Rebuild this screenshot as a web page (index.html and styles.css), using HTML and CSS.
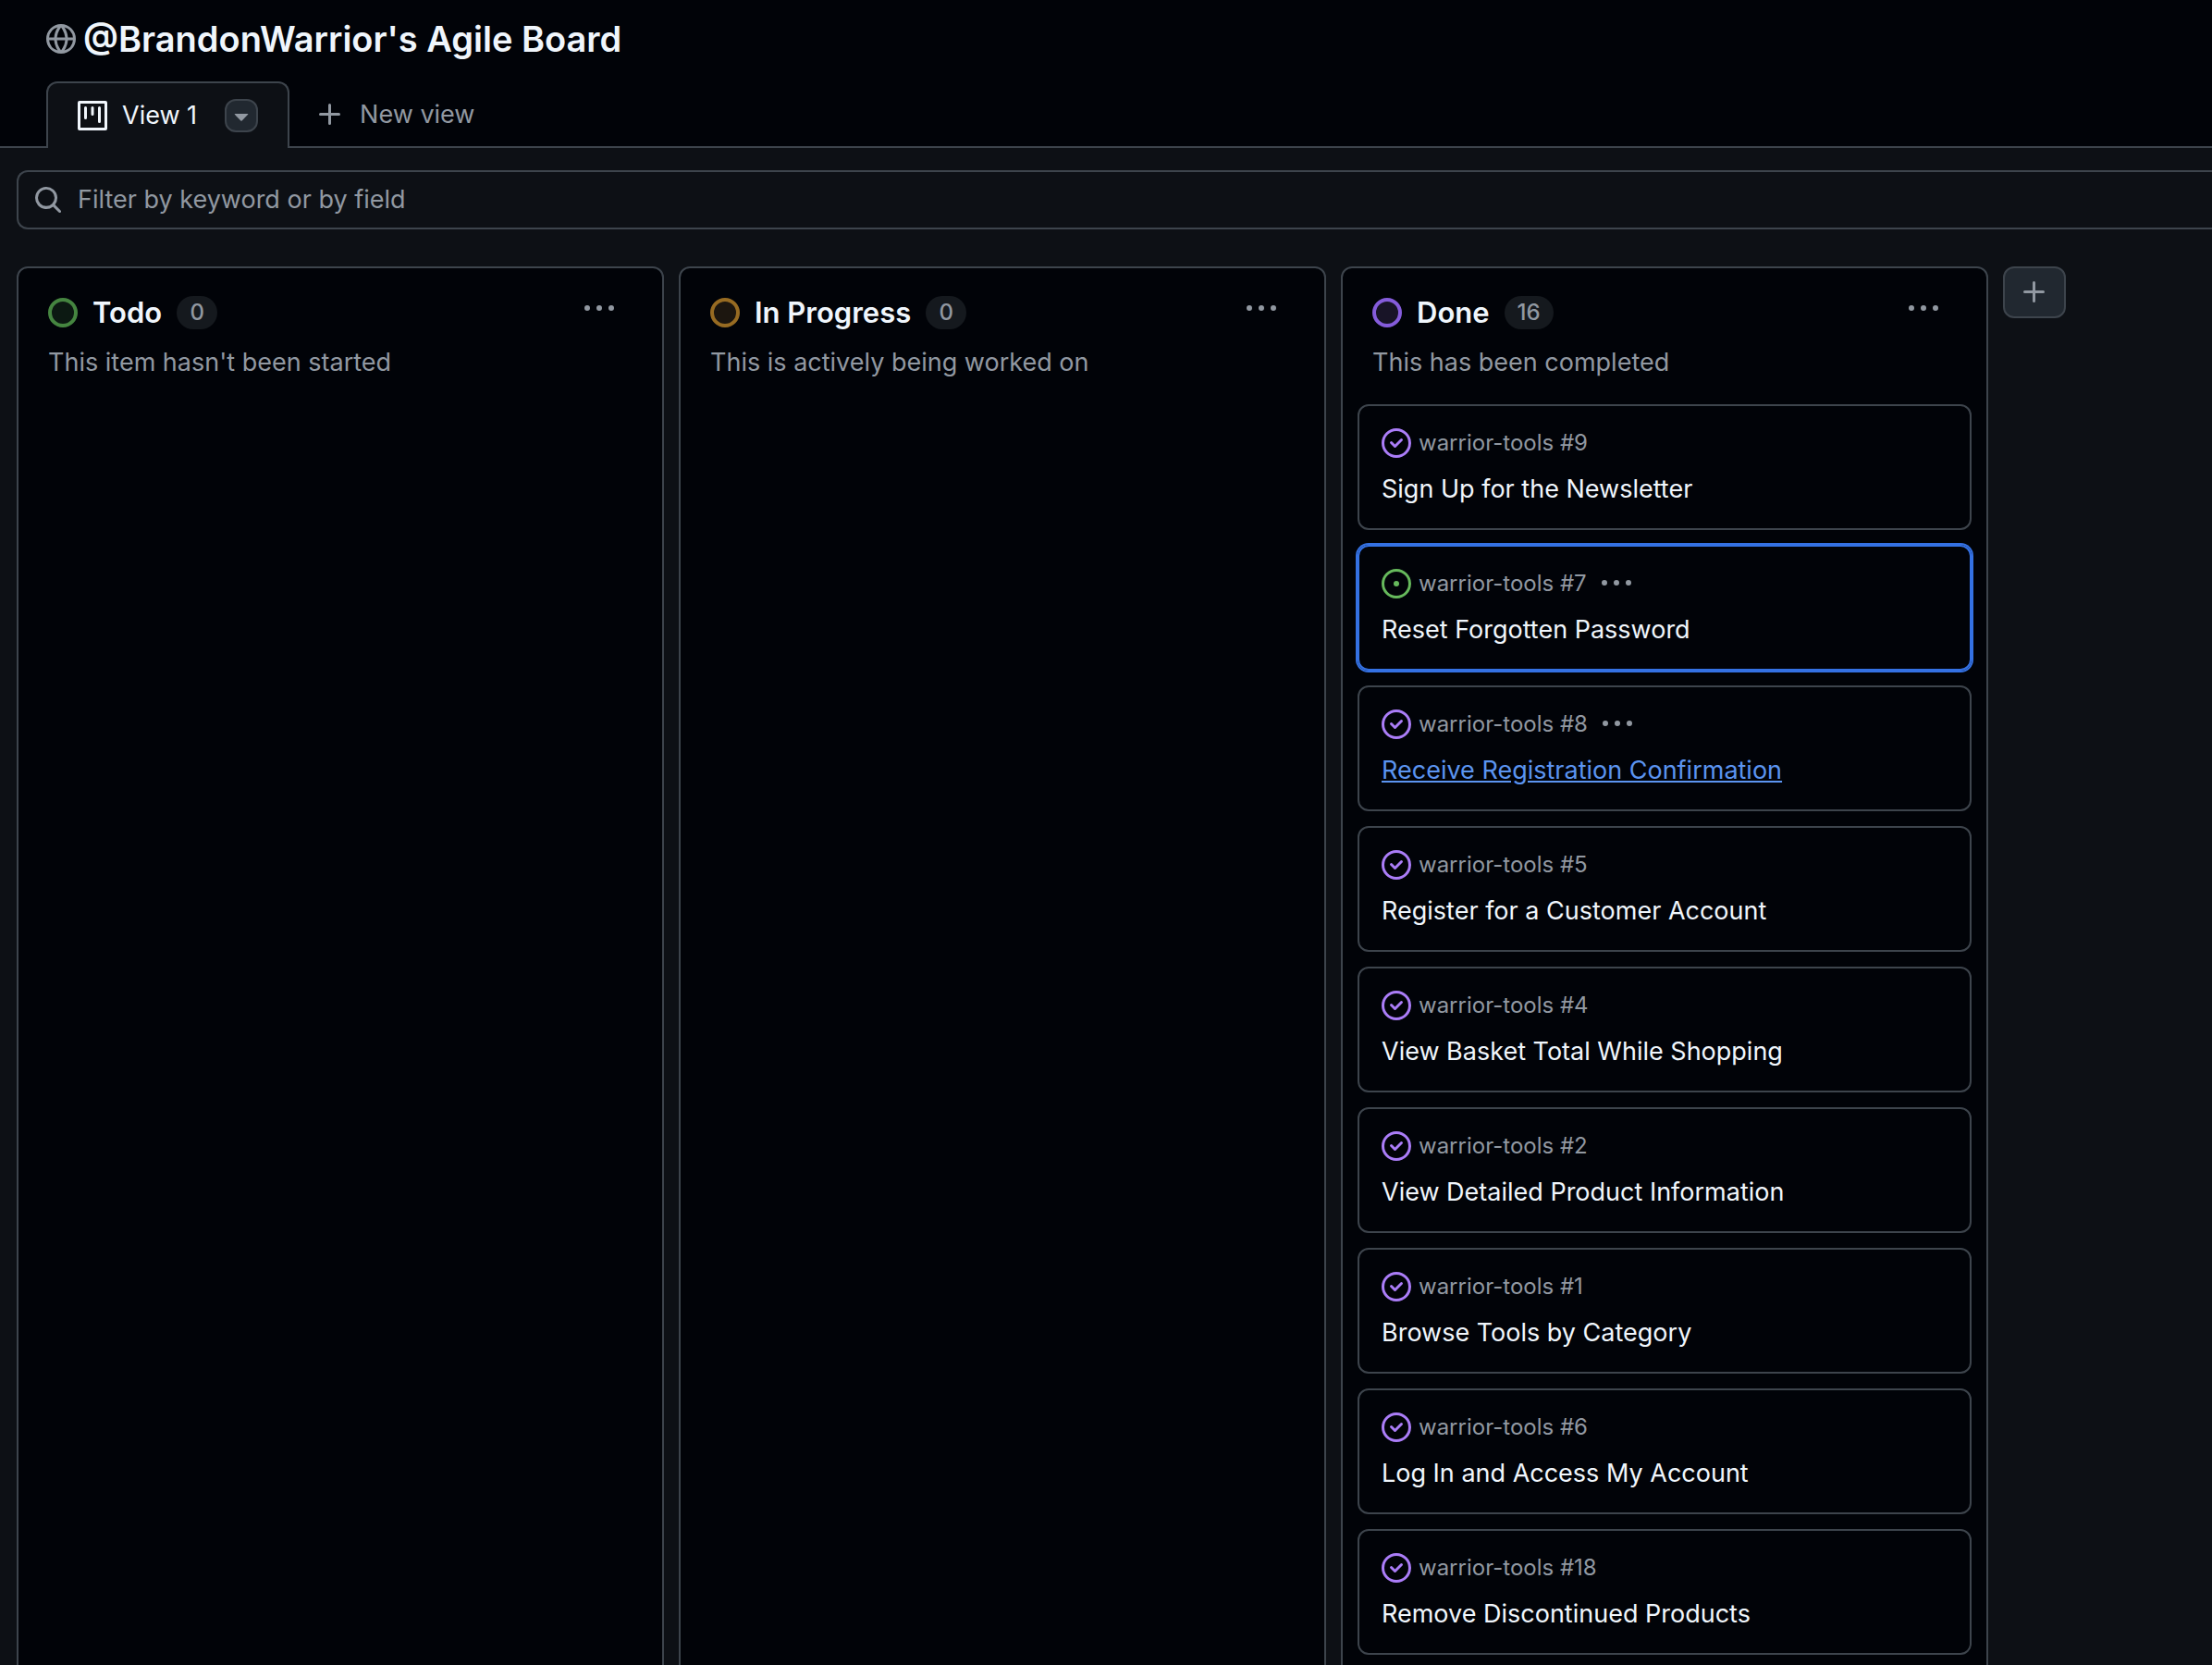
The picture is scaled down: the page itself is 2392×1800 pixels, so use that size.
FILE: index.html
```html
<!DOCTYPE html>
<html lang="en">
<head>
<meta charset="utf-8">
<meta name="viewport" content="width=device-width, initial-scale=1">
<title>@BrandonWarrior's Agile Board</title>
<link rel="stylesheet" href="styles.css">
</head>
<body>
<svg class="sprite" aria-hidden="true">
  <symbol id="closed" viewBox="0 0 16 16"><path d="M11.28 6.78a.75.75 0 0 0-1.06-1.06L7.25 8.69 5.78 7.22a.75.75 0 0 0-1.06 1.06l2 2a.75.75 0 0 0 1.06 0l3.5-3.5Z"/><path d="M16 8A8 8 0 1 1 0 8a8 8 0 0 1 16 0Zm-1.5 0a6.5 6.5 0 1 0-13 0 6.5 6.5 0 0 0 13 0Z"/></symbol>
  <symbol id="open" viewBox="0 0 16 16"><path d="M8 9.5a1.5 1.5 0 1 0 0-3 1.5 1.5 0 0 0 0 3Z"/><path d="M8 0a8 8 0 1 1 0 16A8 8 0 0 1 8 0ZM1.5 8a6.5 6.5 0 1 0 13 0 6.5 6.5 0 0 0-13 0Z"/></symbol>
  <symbol id="kebab" viewBox="0 0 16 16"><path d="M8 9a1.5 1.5 0 1 0 0-3 1.5 1.5 0 0 0 0 3ZM1.5 9a1.5 1.5 0 1 0 0-3 1.5 1.5 0 0 0 0 3Zm13 0a1.5 1.5 0 1 0 0-3 1.5 1.5 0 0 0 0 3Z"/></symbol>
  <symbol id="plus" viewBox="0 0 16 16"><path d="M7.75 2a.75.75 0 0 1 .75.75V7h4.25a.75.75 0 0 1 0 1.5H8.5v4.25a.75.75 0 0 1-1.5 0V8.5H2.75a.75.75 0 0 1 0-1.5H7V2.75A.75.75 0 0 1 7.75 2Z"/></symbol>
  <symbol id="globe" viewBox="0 0 16 16"><path d="M8 0a8 8 0 1 1 0 16A8 8 0 0 1 8 0ZM5.78 8.75a9.64 9.64 0 0 0 1.363 4.177c.255.426.542.832.857 1.215.245-.296.551-.705.857-1.215A9.64 9.64 0 0 0 10.22 8.75Zm4.44-1.5a9.64 9.64 0 0 0-1.363-4.177c-.307-.51-.612-.919-.857-1.215a9.927 9.927 0 0 0-.857 1.215A9.64 9.64 0 0 0 5.78 7.25Zm-5.944 1.5H1.543a6.507 6.507 0 0 0 4.666 5.5c-.123-.181-.24-.365-.352-.552-.715-1.192-1.437-2.874-1.581-4.948Zm-2.733-1.5h2.733c.144-2.074.866-3.756 1.58-4.948.12-.197.237-.381.353-.552a6.507 6.507 0 0 0-4.666 5.5Zm10.181 1.5c-.144 2.074-.866 3.756-1.58 4.948-.12.197-.237.381-.353.552a6.507 6.507 0 0 0 4.666-5.5Zm2.733-1.5a6.507 6.507 0 0 0-4.666-5.5c.123.181.24.365.353.552.714 1.192 1.436 2.874 1.58 4.948Z"/></symbol>
  <symbol id="board" viewBox="0 0 16 16"><path d="M1 0h14a1 1 0 0 1 1 1v14a1 1 0 0 1-1 1H1a1 1 0 0 1-1-1V1a1 1 0 0 1 1-1Zm.5 1.5v13h13v-13Z"/><path d="M4.25 3a.75.75 0 0 1 .75.75v5.5a.75.75 0 0 1-1.5 0v-5.5A.75.75 0 0 1 4.25 3ZM8 3a.75.75 0 0 1 .75.75v3.5a.75.75 0 0 1-1.5 0v-3.5A.75.75 0 0 1 8 3Zm3.75 0a.75.75 0 0 1 .75.75v7.5a.75.75 0 0 1-1.5 0v-7.5a.75.75 0 0 1 .75-.75Z"/></symbol>
  <symbol id="caret" viewBox="0 0 16 16"><path d="m4.427 7.427 3.396 3.396a.25.25 0 0 0 .354 0l3.396-3.396A.25.25 0 0 0 11.396 7H4.604a.25.25 0 0 0-.177.427Z"/></symbol>
  <symbol id="search" viewBox="0 0 16 16"><path d="M10.68 11.74a6 6 0 0 1-7.922-8.982 6 6 0 0 1 8.982 7.922l3.04 3.04a.749.749 0 0 1-.326 1.275.749.749 0 0 1-.734-.215ZM11.5 7a4.499 4.499 0 1 0-8.997 0A4.499 4.499 0 0 0 11.5 7Z"/></symbol>
</svg>

<header class="header">
  <div class="heading">
    <svg class="icon muted"><use href="#globe"/></svg>
    <h1 class="heading-text">@BrandonWarrior's Agile Board</h1>
  </div>
  <nav class="tabs" aria-label="Views">
    <div class="tab">
      <svg class="icon"><use href="#board"/></svg>
      <a class="tab-link" href="#view-1">View 1</a>
      <button class="tab-menu" type="button" aria-label="View options"><svg class="icon"><use href="#caret"/></svg></button>
    </div>
    <button class="new-view" type="button"><svg class="icon"><use href="#plus"/></svg>New view</button>
  </nav>
</header>

<main class="main" id="view-1">
  <div class="filter">
    <label class="filter-label" for="filter" aria-label="Filter"><svg class="icon muted"><use href="#search"/></svg></label>
    <input class="filter-input" id="filter" type="text" placeholder="Filter by keyword or by field">
  </div>

  <div class="columns">
    <section class="column">
      <div class="column-head">
        <span class="dot dot-green"></span>
        <h2 class="column-title">Todo</h2>
        <span class="count">0</span>
        <button class="menu column-menu" type="button" aria-label="Todo actions"><svg class="icon"><use href="#kebab"/></svg></button>
      </div>
      <p class="column-note">This item hasn't been started</p>
    </section>

    <section class="column">
      <div class="column-head">
        <span class="dot dot-orange"></span>
        <h2 class="column-title">In Progress</h2>
        <span class="count">0</span>
        <button class="menu column-menu" type="button" aria-label="In Progress actions"><svg class="icon"><use href="#kebab"/></svg></button>
      </div>
      <p class="column-note">This is actively being worked on</p>
    </section>

    <section class="column">
      <div class="column-head">
        <span class="dot dot-purple"></span>
        <h2 class="column-title">Done</h2>
        <span class="count">16</span>
        <button class="menu column-menu" type="button" aria-label="Done actions"><svg class="icon"><use href="#kebab"/></svg></button>
      </div>
      <p class="column-note">This has been completed</p>
      <div class="cards">
        <article class="card">
          <div class="card-meta"><svg class="icon closed"><use href="#closed"/></svg>warrior-tools #9</div>
          <a class="card-title" href="#9">Sign Up for the Newsletter</a>
        </article>
        <article class="card card-selected">
          <div class="card-meta"><svg class="icon open"><use href="#open"/></svg>warrior-tools #7<button class="menu card-menu" type="button" aria-label="Item actions"><svg class="icon"><use href="#kebab"/></svg></button></div>
          <a class="card-title" href="#7">Reset Forgotten Password</a>
        </article>
        <article class="card">
          <div class="card-meta"><svg class="icon closed"><use href="#closed"/></svg>warrior-tools #8<button class="menu card-menu" type="button" aria-label="Item actions"><svg class="icon"><use href="#kebab"/></svg></button></div>
          <a class="card-title card-title-active" href="#8">Receive Registration Confirmation</a>
        </article>
        <article class="card">
          <div class="card-meta"><svg class="icon closed"><use href="#closed"/></svg>warrior-tools #5</div>
          <a class="card-title" href="#5">Register for a Customer Account</a>
        </article>
        <article class="card">
          <div class="card-meta"><svg class="icon closed"><use href="#closed"/></svg>warrior-tools #4</div>
          <a class="card-title" href="#4">View Basket Total While Shopping</a>
        </article>
        <article class="card">
          <div class="card-meta"><svg class="icon closed"><use href="#closed"/></svg>warrior-tools #2</div>
          <a class="card-title" href="#2">View Detailed Product Information</a>
        </article>
        <article class="card">
          <div class="card-meta"><svg class="icon closed"><use href="#closed"/></svg>warrior-tools #1</div>
          <a class="card-title" href="#1">Browse Tools by Category</a>
        </article>
        <article class="card">
          <div class="card-meta"><svg class="icon closed"><use href="#closed"/></svg>warrior-tools #6</div>
          <a class="card-title" href="#6">Log In and Access My Account</a>
        </article>
        <article class="card">
          <div class="card-meta"><svg class="icon closed"><use href="#closed"/></svg>warrior-tools #18</div>
          <a class="card-title" href="#18">Remove Discontinued Products</a>
        </article>
      </div>
    </section>

    <button class="add-column" type="button" aria-label="Add a new column"><svg class="icon"><use href="#plus"/></svg></button>
  </div>
</main>
</body>
</html>
```

FILE: styles.css
```css
:root {
  --canvas: #0d1015;
  --inset: #010308;
  --border: #3d444c;
  --fg: #f0f6fc;
  --muted: #9198a1;
  --control: #212830;
}

* {
  box-sizing: border-box;
}

body {
  margin: 0;
  height: 100vh;
  overflow: hidden;
  display: flex;
  flex-direction: column;
  background: var(--canvas);
  color: var(--fg);
  font: 27px/36px Inter, "Liberation Sans", sans-serif;
}

h1, h2, p {
  margin: 0;
}

button, input {
  font: inherit;
  padding: 0;
  margin: 0;
}

a {
  color: inherit;
  text-decoration: none;
}

.sprite {
  position: absolute;
  width: 0;
  height: 0;
}

.icon {
  display: block;
  flex: none;
  width: 32px;
  height: 32px;
  fill: currentColor;
}

.muted { color: var(--muted); }
.closed { color: #ab7df8; }
.open { color: #66b95c; }

/* Project heading and view tabs */
.header {
  flex: none;
  padding: 18px 50px 0;
  background: var(--inset);
  border-bottom: 2px solid var(--border);
}

.heading {
  display: flex;
  align-items: center;
  gap: 8px;
  height: 48px;
}

.heading-text {
  font-size: 38px;
  line-height: 48px;
  font-weight: 600;
}

.tabs {
  display: flex;
  margin: 22px 0 -2px;
}

.tab {
  display: flex;
  align-items: center;
  gap: 16px;
  height: 72px;
  padding: 0 32px;
  background: var(--canvas);
  border: 2px solid var(--border);
  border-bottom: 0;
  border-radius: 12px 12px 0 0;
}

.tab-menu {
  display: grid;
  place-items: center;
  width: 36px;
  height: 36px;
  margin-left: 14px;
  background: var(--control);
  border: 2px solid var(--border);
  border-radius: 12px;
  color: var(--muted);
}

.new-view {
  display: flex;
  align-items: center;
  gap: 16px;
  padding: 0 28px;
  background: none;
  border: 0;
  color: var(--muted);
}

/* Filter bar, which runs on past the right edge */
.main {
  flex: 1;
  min-height: 0;
  padding: 24px 0 0 18px;
}

.filter {
  display: flex;
  align-items: center;
  gap: 16px;
  height: 64px;
  padding-left: 16px;
  border: 2px solid var(--border);
  border-right: 0;
  border-radius: 12px 0 0 12px;
}

.filter-input {
  flex: 1;
  background: none;
  border: 0;
  outline: 0;
  color: var(--fg);
}

.filter-input::placeholder {
  color: var(--muted);
  opacity: 1;
}

/* Board */
.columns {
  display: flex;
  gap: 16px;
  min-height: 100%;
  margin-top: 40px;
}

.column {
  flex: none;
  width: 700px;
  padding: 28px 16px 16px;
  background: var(--inset);
  border: 2px solid var(--border);
  border-radius: 12px;
}

.column-head {
  display: flex;
  align-items: center;
  gap: 16px;
  height: 40px;
  padding: 0 36px 0 16px;
}

.dot {
  width: 32px;
  height: 32px;
  border: 4px solid;
  border-radius: 50%;
}

.dot-green { border-color: #458540; background: #0c1912; }
.dot-orange { border-color: #976b22; background: #1c160f; }
.dot-purple { border-color: #855cdb; background: #181427; }

.column-title {
  font-size: 31px;
  line-height: 40px;
  font-weight: 600;
}

.count {
  min-width: 44px;
  padding: 0 14px;
  background: #15191e;
  border-radius: 18px;
  color: var(--muted);
  font-size: 24px;
  line-height: 36px;
  font-weight: 500;
  text-align: center;
}

.menu {
  background: none;
  border: 0;
  color: var(--muted);
}

.column-menu {
  align-self: flex-start;
  margin-left: auto;
}

.column-note {
  margin-top: 16px;
  padding: 0 16px;
  color: var(--muted);
}

.cards {
  display: flex;
  flex-direction: column;
  gap: 16px;
  margin-top: 27px;
}

.card {
  height: 136px;
  padding: 24px;
  border: 2px solid var(--border);
  border-radius: 12px;
}

.card-selected {
  border-color: #3471e3;
  box-shadow: 0 0 0 2px #3471e3;
}

.card-meta {
  display: flex;
  align-items: center;
  gap: 8px;
  margin-bottom: 16px;
  color: var(--muted);
  font-size: 24px;
  line-height: 32px;
}

.card-menu {
  margin-left: 8px;
}

.card-title {
  display: block;
}

.card-title-active {
  color: #5b94f0;
  text-decoration: underline;
}

.add-column {
  display: grid;
  place-items: center;
  flex: none;
  width: 68px;
  height: 56px;
  background: var(--control);
  border: 2px solid var(--border);
  border-radius: 12px;
  color: var(--muted);
}
```
